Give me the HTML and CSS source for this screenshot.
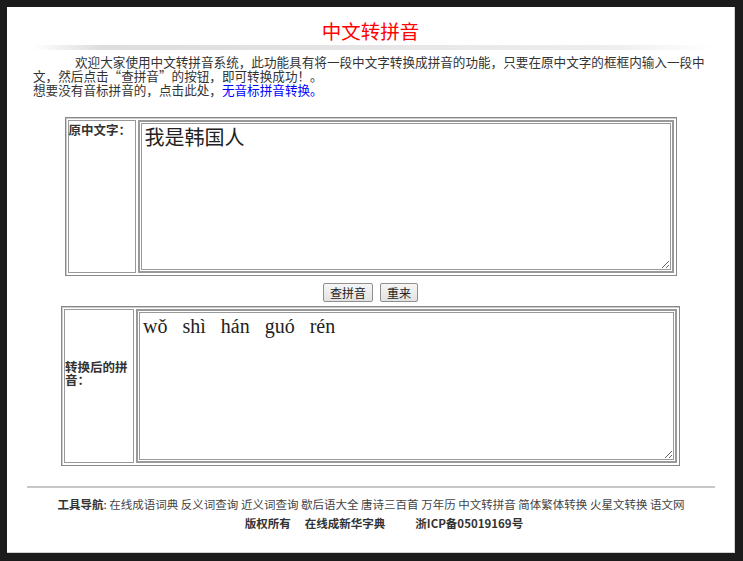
FILE: index.html
```html
<!DOCTYPE html>
<html lang="zh-CN">
<head>
    <meta charset="UTF-8">
    <title>中文转拼音</title>
    <link rel="stylesheet" href="styles.css">
</head>
<body>
    <div class="page">
        <h1 class="titulo">中文转拼音</h1>
        <div class="barra"></div>
        <p class="intro">欢迎大家使用中文转拼音系统，此功能具有将一段中文字转换成拼音的功能，只要在原中文字的框框内输入一段中文，然后点击“查拼音”的按钮，即可转换成功！。</p>
        <p class="intro sem-recuo">想要没有音标拼音的，点击此处，<a href="#">无音标拼音转换。</a></p>

        <table class="caixa caixa-um">
            <tr>
                <td class="rotulo topo">原中文字：</td>
                <td class="campo"><textarea class="texto-cn">我是韩国人</textarea></td>
            </tr>
        </table>

        <div class="botoes">
            <button class="botao">查拼音</button>
            <button class="botao">重来</button>
        </div>

        <table class="caixa caixa-dois">
            <tr>
                <td class="rotulo meio">转换后的拼音：</td>
                <td class="campo"><textarea class="texto-py">wǒ shì hán guó rén</textarea></td>
            </tr>
        </table>

        <div class="rodape">
            <p class="nav"><b>工具导航</b>: <a href="#">在线成语词典</a> <a href="#">反义词查询</a> <a href="#">近义词查询</a> <a href="#">歇后语大全</a> <a href="#">唐诗三百首</a> <a href="#">万年历</a> <a href="#">中文转拼音</a> <a href="#">简体繁体转换</a> <a href="#">火星文转换</a> <a href="#">语文网</a></p>
            <p class="direitos"><span>版权所有</span><span class="sep1">在线成新华字典</span><span class="sep2">浙ICP备05019169号</span></p>
        </div>
    </div>
</body>
</html>
```

FILE: styles.css
```css
body {
    margin: 0;
    padding: 7px 0 0 7px;
    background-color: #1b1b1b;
    font-family: "Noto Sans CJK SC", sans-serif;
    color: #333;
}

.page {
    width: 728px;
    height: 546px;
    background-color: #fff;
    border-right: 1px solid #d0d0d0;
    border-bottom: 1px solid #d0d0d0;
    box-sizing: border-box;
}

.titulo {
    margin: 0;
    padding-top: 12px;
    font-size: 19.5px;
    line-height: 24px;
    font-weight: normal;
    color: #f00;
    text-align: center;
}

.barra {
    margin: 2px 20px 0 26px;
    height: 5px;
    background: linear-gradient(to right, rgba(220,220,220,0), #ddd 10%, #e6e6e6 50%, #eee 85%, rgba(238,238,238,0));
}

.intro {
    margin: 5px 20px 0 26px;
    font-size: 12.6px;
    line-height: 14px;
    text-indent: 42px;
}
.intro.sem-recuo {
    margin-top: 0;
    text-indent: 0;
}
.intro a {
    color: #00f;
    text-decoration: none;
}

.caixa {
    margin: 20px auto 0;
    border: 1px solid #888;
    border-spacing: 2px;
    box-shadow: inset 1px 1px 0 #ccc;
}
.caixa td {
    border: 1px solid #999;
    padding: 0;
}
.rotulo {
    width: 66px;
    font-size: 12.5px;
    line-height: 13px;
    font-weight: bold;
}
.topo {
    vertical-align: top;
    padding-top: 2px !important;
}
.meio {
    width: 68px;
    vertical-align: middle;
    padding-bottom: 26px !important;
}
.campo textarea {
    display: block;
    margin: 0;
    padding: 0 3px;
    border: 3px double #999;
    box-sizing: border-box;
    color: #222;
}
.texto-cn {
    width: 534px;
    height: 151px;
    font-family: "Noto Sans CJK SC", sans-serif;
    font-size: 20px;
    line-height: 26px;
}
.texto-py {
    width: 539px;
    height: 152px;
    font-family: "Liberation Serif", serif;
    font-size: 20px;
    word-spacing: 10px;
    line-height: 26px;
}

.caixa-dois {
    margin-top: 4px;
}

.botoes {
    margin-top: 7px;
    display: flex;
    justify-content: center;
    gap: 7px;
}
.botao {
    height: 19px;
    padding: 0 6px;
    font-family: "Noto Sans CJK SC", sans-serif;
    font-size: 12px;
    line-height: 15px;
    color: #222;
    background: linear-gradient(#f6f6f6, #e2e2e2);
    border: 1px solid #8f8f8f;
    border-radius: 2px;
}

.rodape {
    margin: 20px 19px 0 20px;
    border-top: 2px solid #c8c8c8;
    text-align: center;
    font-size: 11.5px;
}
.rodape p {
    margin: 0;
    line-height: 19px;
}
.nav {
    padding-top: 7px;
}
.nav a {
    color: #444;
    text-decoration: none;
}
.direitos {
    padding-left: 26px;
    font-weight: bold;
}
.direitos .sep1 {
    margin-left: 14px;
}
.direitos .sep2 {
    margin-left: 30px;
}
```
